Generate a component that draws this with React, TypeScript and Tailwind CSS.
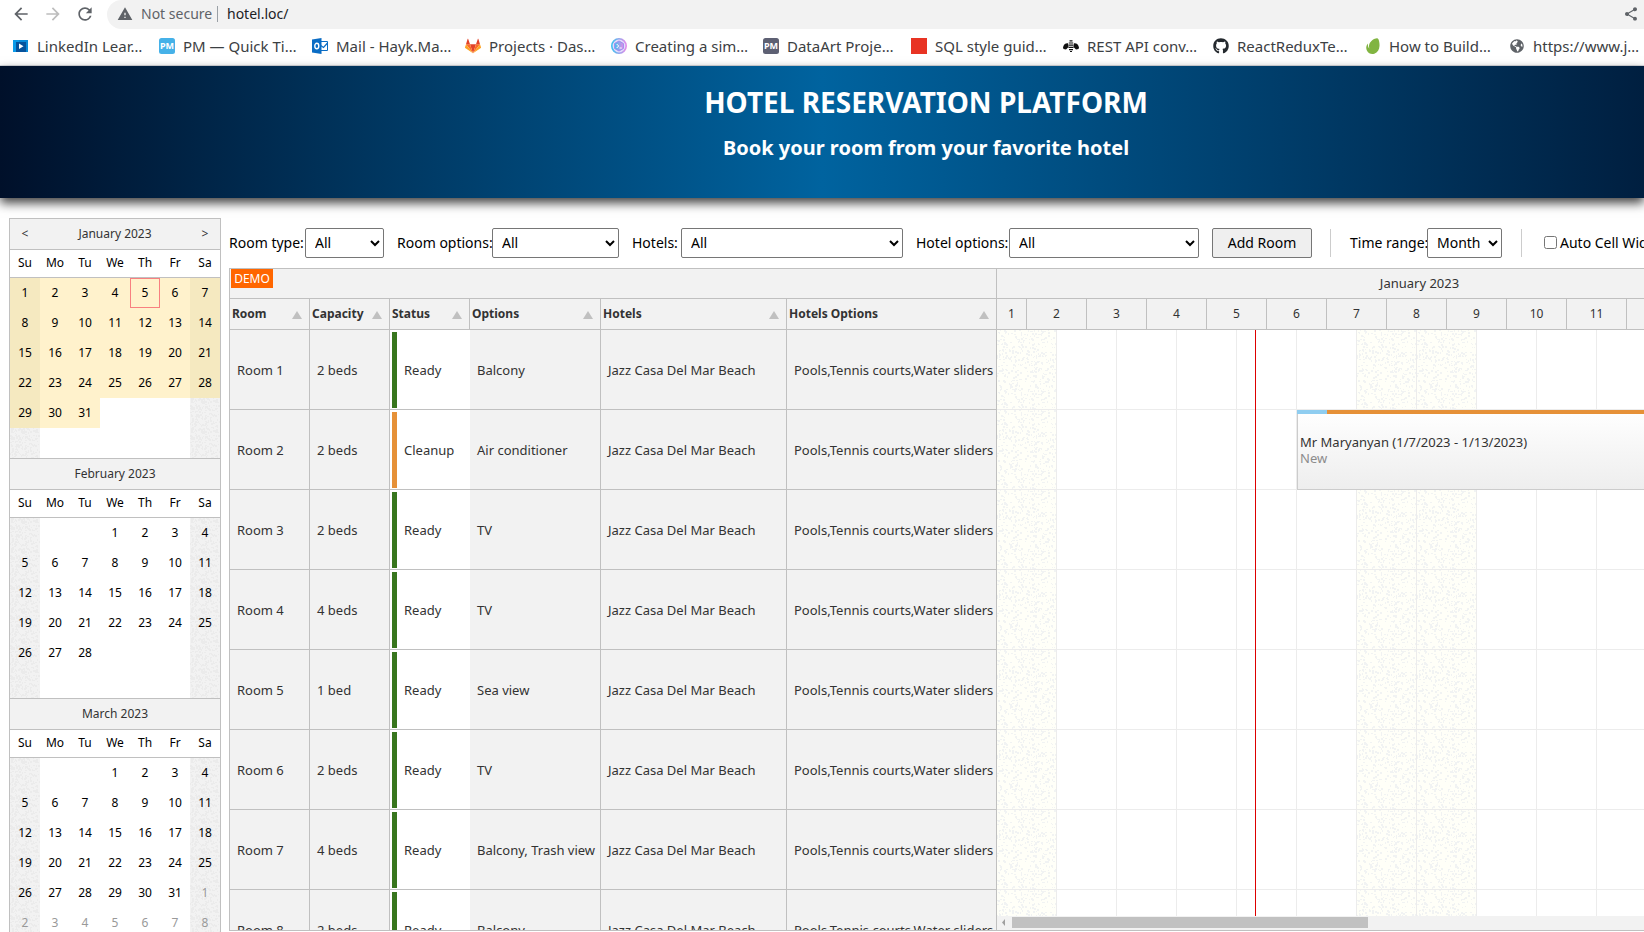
import React from "react";
import { MdArrowBack, MdArrowForward, MdRefresh, MdShare, MdWarning } from "react-icons/md";
import { FaGithub, FaGlobeAmericas } from "react-icons/fa";

type Tone = "warm" | "gray";

function makeSpecks(seed: number, count: number, size: number): string {
  let s = seed;
  const next = () => {
    s = (s * 1103515245 + 12345) % 2147483648;
    return s / 2147483648;
  };
  let d = "";
  for (let i = 0; i < count; i++) {
    const x = Math.floor(next() * size);
    const y = Math.floor(next() * size);
    const w = 1 + Math.floor(next() * 2);
    const h = 1 + Math.floor(next() * 2);
    d += `M${x} ${y}h${w}v${h}h-${w}z`;
  }
  return d;
}

const WARM_SPECKS = makeSpecks(7, 380, 60);
const GRAY_SPECKS = makeSpecks(21, 700, 60);

function Texture({ id, tone }: { id: string; tone: Tone }) {
  const warm = tone === "warm";
  return (
    <svg className="absolute inset-0 h-full w-full" aria-hidden="true">
      <defs>
        <pattern id={id} width="60" height="60" patternUnits="userSpaceOnUse">
          <rect width="60" height="60" fill={warm ? "#fffff8" : "#f2f2f2"} />
          <path d={warm ? WARM_SPECKS : GRAY_SPECKS} fill={warm ? "#f1f3f3" : "#ebebeb"} />
        </pattern>
      </defs>
      <rect width="100%" height="100%" fill={`url(#${id})`} />
    </svg>
  );
}

/* ---------- Browser bar ---------- */

const icon = "h-4 w-4 shrink-0";

const LinkedInIcon = () => (
  <svg className={icon} viewBox="0 0 16 16">
    <rect x="0" y="2" width="15" height="12" fill="#0a8ad8" />
    <rect x="0" y="2" width="6" height="12" fill="#0c9be8" />
    <rect x="3" y="4" width="10" height="10" fill="#06529c" />
    <path d="M6 5.5v5.5l4.5-2.7z" fill="#fff" />
  </svg>
);
const PmIcon = ({ fill }: { fill: string }) => (
  <svg className={icon} viewBox="0 0 16 16">
    <rect width="16" height="16" rx="2.5" fill={fill} />
    <text x="8" y="11.4" textAnchor="middle" fontSize="9" fontWeight="700" fill="#fff" fontFamily="Noto Sans, sans-serif">PM</text>
  </svg>
);
const OutlookIcon = () => (
  <svg className={icon} viewBox="0 0 16 16">
    <path d="M8 3.5h7.5v9H8z" fill="#fff" stroke="#0a6cc4" />
    <path d="M8 7l3.5 2.5L15.5 5" fill="none" stroke="#0a6cc4" strokeWidth="1.2" />
    <path d="M0 1.5L9.5 0v16L0 14.5z" fill="#0a6cc4" />
    <ellipse cx="4.8" cy="8" rx="2" ry="2.7" fill="none" stroke="#fff" strokeWidth="1.4" />
  </svg>
);
const GitLabIcon = () => (
  <svg className={icon} viewBox="0 0 16 16">
    <path d="M8 15.3L5 6.2h6z" fill="#e24329" />
    <path d="M8 15.3L1 6.2h4zM8 15.3l7-9.1h-4z" fill="#fc6d26" />
    <path d="M1 6.2L0 9.2c-.1.3 0 .6.2.8L8 15.3zM15 6.2l1 3c.1.3 0 .6-.2.8L8 15.3z" fill="#fca326" />
    <path d="M1 6.2h4L3.2 1c-.1-.3-.5-.3-.6 0zM15 6.2h-4L12.8 1c.1-.3.5-.3.6 0z" fill="#e24329" />
  </svg>
);
const TerminalIcon = () => (
  <svg className={icon} viewBox="0 0 16 16">
    <defs>
      <linearGradient id="ring" x1="0" x2="1">
        <stop offset="0" stopColor="#3fc1f0" />
        <stop offset="1" stopColor="#e58be8" />
      </linearGradient>
    </defs>
    <circle cx="8" cy="8" r="7.2" fill="#e4dcfb" stroke="url(#ring)" strokeWidth="1.6" />
    <path d="M8 3l4.4 2.5v5L8 13l-4.4-2.5v-5z" fill="url(#ring)" stroke="#9c8cf0" />
    <path d="M5.7 6l2 2-2 2M8.5 10h2.3" fill="none" stroke="#fff" />
  </svg>
);
const RedSquareIcon = () => (
  <svg className={icon} viewBox="0 0 16 16">
    <rect width="16" height="16" fill="#e83323" />
  </svg>
);
const BeeIcon = () => (
  <svg className={icon} viewBox="0 0 16 16">
    <path d="M0 9.500C.5 6.500 2.500 5 5 5.300L5.500 9 3 11.500.5 11zM16 9.500C15.500 6.500 13.500 5 11 5.300L10.500 9l2.500 2.500 2.500-.5z" fill="#111" />
    <path d="M6.500 2.800h3M5.800 5h4.400M5.500 7.200h5M5.500 9.400h5M6 11.600h4M7 13.500h2" stroke="#111" strokeWidth="1.200" />
  </svg>
);
const LeafIcon = () => (
  <svg className={icon} viewBox="0 0 16 16">
    <path d="M12.700.4C10-.3 5.500 3 4.300 6.200c-.6 1.800-.3 3.300.1 4.300C3.300 9.500 2.800 8 3 5.500 1.200 7.500.6 10.200 2 12.800 3.500 15.600 6.500 16.500 9.300 15.700c3.400-1 5-4 5.200-7.700C14.700 5 14 1 12.700.4z" fill="#81b441" />
  </svg>
);

const bookmarks: { label: string; width: string; icon: React.ReactNode }[] = [
  { label: "LinkedIn Lear…", width: "w-[146px]", icon: <LinkedInIcon /> },
  { label: "PM — Quick Ti…", width: "w-[153px]", icon: <PmIcon fill="#45b1e8" /> },
  { label: "Mail - Hayk.Ma…", width: "w-[153px]", icon: <OutlookIcon /> },
  { label: "Projects · Das…", width: "w-[146px]", icon: <GitLabIcon /> },
  { label: "Creating a sim…", width: "w-[152px]", icon: <TerminalIcon /> },
  { label: "DataArt Proje…", width: "w-[148px]", icon: <PmIcon fill="#5d6073" /> },
  { label: "SQL style guid…", width: "w-[152px]", icon: <RedSquareIcon /> },
  { label: "REST API conv…", width: "w-[150px]", icon: <BeeIcon /> },
  { label: "ReactReduxTe…", width: "w-[152px]", icon: <FaGithub className="h-4 w-4 shrink-0 text-[#24292e]" /> },
  { label: "How to Build…", width: "w-[144px]", icon: <LeafIcon /> },
  { label: "https://www.j…", width: "w-[152px]", icon: <FaGlobeAmericas className="h-[14px] w-4 shrink-0 text-[#5f6368]" /> },
];

function BrowserBar() {
  return (
    <div className="shrink-0 border-b border-[#dadce0] bg-white">
      <div className="flex h-[29px] items-center text-[#5f6368]">
        <div className="flex pb-[2px]">
          <button aria-label="Back" className="ml-[5px] flex w-8 justify-center"><MdArrowBack className="h-5 w-5" /></button>
          <button aria-label="Forward" className="flex w-8 justify-center text-[#bdbdbd]"><MdArrowForward className="h-5 w-5" /></button>
          <button aria-label="Reload" className="flex w-8 justify-center"><MdRefresh className="h-5 w-5" /></button>
        </div>
        <div className="ml-[6px] flex h-full flex-1 items-center rounded-l-[15px] bg-[#f2f2f2] pb-[2px] pl-[10px] pr-[5px] text-[14px]">
          <MdWarning className="h-4 w-4" />
          <span className="ml-2 w-[76px] whitespace-nowrap">Not secure</span>
          <span className="h-4 w-px bg-[#9aa0a6]" />
          <span className="ml-[9px] flex-1 text-[#202124]">hotel.loc/</span>
          <button aria-label="Share"><MdShare className="h-4 w-4" /></button>
        </div>
      </div>
      <nav className="flex h-9 items-center overflow-hidden pb-[2px] pl-[13px] text-[15px] text-[#3c4043]">
        {bookmarks.map((b) => (
          <a key={b.label} href="#" className={`flex shrink-0 items-center gap-2 whitespace-nowrap ${b.width}`}>
            {b.icon}
            {b.label}
          </a>
        ))}
      </nav>
    </div>
  );
}

/* ---------- Month navigator ---------- */

const months = [
  { name: "January 2023", start: 0, days: 31, trailing: 0, selected: true },
  { name: "February 2023", start: 3, days: 28, trailing: 0, selected: false },
  { name: "March 2023", start: 3, days: 31, trailing: 8, selected: false },
];
const weekdays = ["Su", "Mo", "Tu", "We", "Th", "Fr", "Sa"];

function Month({ index }: { index: number }) {
  const m = months[index];
  const cell = (row: number, col: number) => {
    const n = row * 7 + col - m.start + 1;
    const inMonth = n >= 1 && n <= m.days;
    const weekend = col === 0 || col === 6;
    const selected = inMonth && m.selected;
    const text = inMonth ? n : n > m.days && n - m.days <= m.trailing ? n - m.days : "";
    const bg = selected ? (weekend ? "bg-[#f5e9c0]" : "bg-[#fff2cc]") : "";
    const today = selected && n === 5 ? "border border-[#f88080]" : "";
    return (
      <td key={col} className={`relative h-[30px] p-0 ${bg} ${today} ${inMonth ? "text-black" : "text-[#999]"}`}>
        {weekend && !selected && <Texture id={`m${index}-${row}-${col}`} tone="gray" />}
        <span className="relative">{text}</span>
      </td>
    );
  };
  return (
    <table className="w-full table-fixed border-separate border-spacing-0 text-center text-[12px] leading-[18px]">
      <thead>
        <tr className="bg-[#f2f2f2] text-[#333]">
          <th className="h-8 border-y border-[#c0c0c0] p-0 font-normal">{index === 0 && <button aria-label="Previous month">&lt;</button>}</th>
          <th colSpan={5} className="border-y border-[#c0c0c0] p-0 font-normal">{m.name}</th>
          <th className="border-y border-[#c0c0c0] p-0 font-normal">{index === 0 && <button aria-label="Next month">&gt;</button>}</th>
        </tr>
        <tr className="text-black">
          {weekdays.map((d) => (
            <th key={d} className="h-7 border-b border-[#c0c0c0] p-0 pb-[2px] font-normal">{d}</th>
          ))}
        </tr>
      </thead>
      <tbody>
        {[0, 1, 2, 3, 4, 5].map((r) => (
          <tr key={r}>{weekdays.map((_, c) => cell(r, c))}</tr>
        ))}
      </tbody>
    </table>
  );
}

/* ---------- Toolbar ---------- */

function Filter({ id, label, labelWidth, selectWidth, value }: { id: string; label: string; labelWidth: string; selectWidth: string; value: string }) {
  return (
    <div className="flex shrink-0 items-center">
      <label htmlFor={id} className={`whitespace-nowrap pb-[2px] ${labelWidth}`}>{label}</label>
      <select id={id} className={`h-[30px] rounded-[2px] border border-[#767676] bg-white pb-[2px] pl-[5px] ${selectWidth}`}>
        <option>{value}</option>
      </select>
    </div>
  );
}

function Toolbar() {
  return (
    <div className="flex h-[30px] shrink-0 items-center overflow-hidden text-[14px] text-black">
      <div className="flex shrink-0 items-center gap-[13px]">
        <Filter id="type" label="Room type:" labelWidth="w-[76px]" selectWidth="w-[79px]" value="All" />
        <Filter id="ropt" label="Room options:" labelWidth="w-[95px]" selectWidth="w-[127px]" value="All" />
        <Filter id="hotels" label="Hotels:" labelWidth="w-[49px]" selectWidth="w-[222px]" value="All" />
        <Filter id="hopt" label="Hotel options:" labelWidth="w-[93px]" selectWidth="w-[190px]" value="All" />
        <button className="h-[30px] w-[100px] rounded-[2px] border border-[#767676] bg-[#efefef] pb-[2px]">Add Room</button>
      </div>
      <span className="ml-[18px] mr-[19px] h-7 w-px shrink-0 bg-[#ccc]" />
      <Filter id="range" label="Time range:" labelWidth="w-[77px]" selectWidth="w-[75px]" value="Month" />
      <span className="ml-[19px] mr-[22px] h-7 w-px shrink-0 bg-[#ccc]" />
      <div className="flex shrink-0 items-center gap-[3px] pb-[2px]">
        <input id="auto" type="checkbox" className="h-[13px] w-[13px] shrink-0" />
        <label htmlFor="auto" className="whitespace-nowrap">Auto Cell Width</label>
      </div>
    </div>
  );
}

/* ---------- Scheduler ---------- */

const columns = [
  { name: "Room", width: "w-[80px]" },
  { name: "Capacity", width: "w-[80px]" },
  { name: "Status", width: "w-[80px]" },
  { name: "Options", width: "w-[131px]" },
  { name: "Hotels", width: "w-[186px]" },
  { name: "Hotels Options", width: "w-[210px]" },
];

const rooms = [
  { name: "Room 1", beds: "2 beds", status: "Ready", options: "Balcony" },
  { name: "Room 2", beds: "2 beds", status: "Cleanup", options: "Air conditioner" },
  { name: "Room 3", beds: "2 beds", status: "Ready", options: "TV" },
  { name: "Room 4", beds: "4 beds", status: "Ready", options: "TV" },
  { name: "Room 5", beds: "1 bed", status: "Ready", options: "Sea view" },
  { name: "Room 6", beds: "2 beds", status: "Ready", options: "TV" },
  { name: "Room 7", beds: "4 beds", status: "Ready", options: "Balcony, Trash view" },
  { name: "Room 8", beds: "2 beds", status: "Ready", options: "Balcony" },
];

function RoomTable() {
  const cell = "h-20 border-b border-r border-[#c0c0c0] py-0 pl-[7px] pr-0 font-normal whitespace-nowrap";
  return (
    <table className="w-[767px] shrink-0 table-fixed border-separate border-spacing-0 self-start bg-[#f2f2f2] text-left text-[13px] leading-4 text-[#333]">
      <colgroup>
        {columns.map((c) => (
          <col key={c.name} className={c.width} />
        ))}
      </colgroup>
      <thead>
        <tr>
          <th colSpan={6} className="h-[30px] border-b border-r border-[#c0c0c0] p-0 pl-px align-top font-normal">
            <span className="block h-[19px] w-[42px] bg-[#ff6600] text-center text-[12px] leading-[19px] text-white">DEMO</span>
          </th>
        </tr>
        <tr>
          {columns.map((c) => (
            <th key={c.name} className="h-[31px] border-b border-r border-[#c0c0c0] py-0 pl-[2px] pr-[7px] text-[12px] font-bold">
              <span className="flex items-center justify-between whitespace-nowrap">
                {c.name}
                <svg className="mt-[2px] h-2 w-[10px]" viewBox="0 0 10 8"><path d="M5 0l5 8H0z" fill="#c0c0c0" /></svg>
              </span>
            </th>
          ))}
        </tr>
      </thead>
      <tbody>
        {rooms.map((r) => (
          <tr key={r.name}>
            <td className={cell}>{r.name}</td>
            <td className={cell}>{r.beds}</td>
            <td className="h-20 border-b border-[#c0c0c0] bg-white p-0">
              <span className="flex items-center">
                <span className={`ml-[2px] h-[76px] w-[5px] ${r.status === "Ready" ? "bg-[#38761d]" : "bg-[#e69138]"}`} />
                <span className="ml-[7px]">{r.status}</span>
              </span>
            </td>
            <td className={cell}>{r.options}</td>
            <td className={cell}>Jazz Casa Del Mar Beach</td>
            <td className={cell}>Pools,Tennis courts,Water sliders</td>
          </tr>
        ))}
      </tbody>
    </table>
  );
}

const dayNumbers = [2, 3, 4, 5, 6, 7, 8, 9, 10, 11, 12, 13, 14, 15];
const slots = [1, 2, 3, 4, 5, 6, 7, 8, 9, 10, 11, 12, 13, 14, 15];

function Timeline() {
  return (
    <div className="flex min-w-0 flex-1 flex-col overflow-hidden text-[13px] text-[#333]">
      <div className="h-[30px] shrink-0 border-b border-[#c0c0c0] bg-[#f2f2f2] pl-[198px] text-center leading-[29px]">January 2023</div>
      <div className="flex h-[31px] shrink-0 overflow-hidden border-b border-[#c0c0c0] bg-[#f2f2f2] text-center text-[12px] leading-[30px]">
        <span className="w-[30px] shrink-0 border-r border-[#c0c0c0]">1</span>
        {dayNumbers.map((d) => (
          <span key={d} className="w-[60px] shrink-0 border-r border-[#c0c0c0]">{d}</span>
        ))}
      </div>
      <div className="relative min-h-0 flex-1 overflow-hidden bg-white">
        {rooms.map((r, i) => (
          <div key={r.name} className="flex h-20 border-b border-[#ececec]">
            {slots.map((s) => (
              <div key={s} className="relative w-[60px] shrink-0 border-r border-[#ececec]">
                {(s % 7 === 0 || s % 7 === 1) && <Texture id={`w${i}-${s}`} tone="warm" />}
              </div>
            ))}
          </div>
        ))}
        <div className="absolute left-[258px] top-0 h-full w-px bg-[#dd0000]" />
        <div className="absolute left-[300px] top-20 flex h-20 w-[420px] flex-col border-b border-l border-[#ccc] bg-linear-to-b from-white to-[#eeeeee]">
          <div className="flex h-1 shrink-0 bg-[#e69138]"><span className="-ml-px w-[30px] bg-[#8fcdf0]" /></div>
          <div className="flex flex-1 flex-col justify-center pb-1 pl-[2px] leading-4">
            <span>Mr Maryanyan (1/7/2023 - 1/13/2023)</span>
            <span className="text-[#8c8c8c]">New</span>
          </div>
        </div>
      </div>
      <div className="flex h-[14px] shrink-0 items-center bg-[#f2f2f2] pb-px">
        <svg className="ml-[5px] mr-[7px] h-[7px] w-[3px]" viewBox="0 0 3 7"><path d="M3 0v7L0 3.500z" fill="#a0a0a0" /></svg>
        <span className="h-[11px] w-[356px] bg-[#c1c1c1]" />
      </div>
    </div>
  );
}

export default function App() {
  return (
    <div className="flex h-screen flex-col overflow-hidden bg-white font-['Noto_Sans',sans-serif]">
      <BrowserBar />
      <header className="relative flex shrink-0 flex-col items-center gap-4 bg-[linear-gradient(90deg,#00102a_0%,#00639f_50%,#001f40_100%)] pb-9 pl-52 pt-5 text-white shadow-[0_5px_10px_rgba(0,0,0,0.75)]">
        <h1 className="text-[28px] font-bold leading-8">HOTEL RESERVATION PLATFORM</h1>
        <h2 className="text-[20px] font-bold leading-7">Book your room from your favorite hotel</h2>
      </header>
      <main className="flex min-h-0 flex-1 gap-2 overflow-hidden pl-[9px] pt-5">
        <aside className="w-[212px] shrink-0 border-x border-[#c0c0c0]">
          {months.map((m, i) => (
            <Month key={m.name} index={i} />
          ))}
        </aside>
        <div className="flex min-w-0 flex-1 flex-col gap-[10px] pb-px pt-[10px]">
          <Toolbar />
          <div className="flex min-h-0 flex-1 overflow-hidden border-y border-l border-[#c0c0c0]">
            <RoomTable />
            <Timeline />
          </div>
        </div>
      </main>
    </div>
  );
}
